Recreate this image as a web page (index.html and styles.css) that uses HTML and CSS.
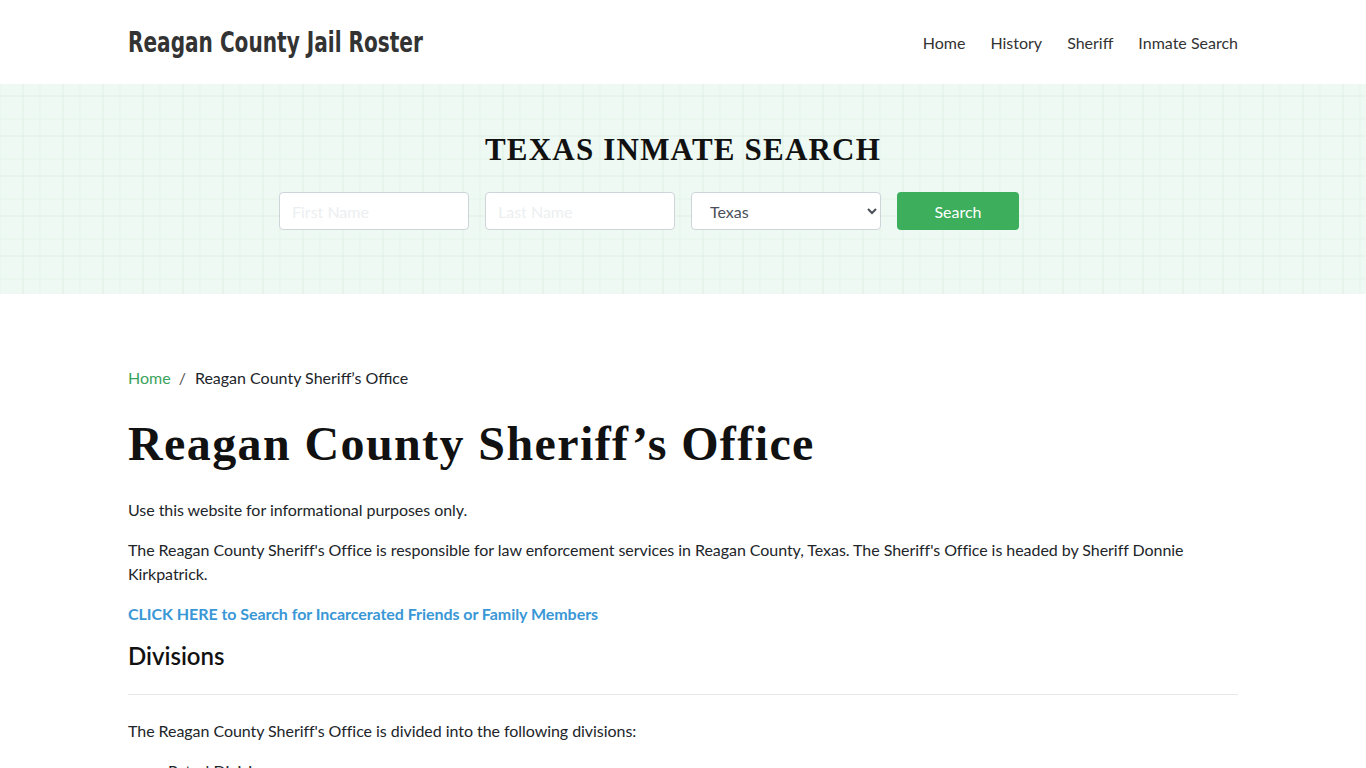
FILE: index.html
```html
<!DOCTYPE html>
<html lang="en">
<head>
  <meta charset="UTF-8" />
  <meta name="viewport" content="width=device-width, initial-scale=1.0" />
  <title>Reagan County Sheriff's Office</title>
  <link rel="stylesheet" href="styles.css">
</head>
<body>

<!-- Top bar -->
<header class="site-header">
  <div class="container header-row">
    <a class="brand" href="#">Reagan County Jail Roster</a>
    <nav class="main-nav">
      <a href="#">Home</a>
      <a href="#">History</a>
      <a href="#">Sheriff</a>
      <a href="#">Inmate Search</a>
    </nav>
  </div>
</header>

<!-- Search banner -->
<section class="search-banner">
  <h2 class="banner-title">TEXAS INMATE SEARCH</h2>
  <form class="container search-form" onsubmit="return false">
    <input type="text" class="field" placeholder="First Name">
    <input type="text" class="field" placeholder="Last Name">
    <select class="field select">
      <option>Texas</option>
    </select>
    <button class="search-btn" type="submit">Search</button>
  </form>
</section>

<main class="container content">
  <div class="breadcrumb">
    <a href="#">Home</a>
    <span class="sep">/</span>
    <span>Reagan County Sheriff’s Office</span>
  </div>

  <h1 class="page-title">Reagan County Sheriff’s Office</h1>

  <p>Use this website for informational purposes only.</p>
  <p>The Reagan County Sheriff's Office is responsible for law enforcement services in Reagan County, Texas. The Sheriff's Office is headed by Sheriff Donnie Kirkpatrick.</p>
  <p class="cta-line"><a class="cta" href="#">CLICK HERE to Search for Incarcerated Friends or Family Members</a></p>

  <h2 class="section-title">Divisions</h2>
  <hr>

  <p>The Reagan County Sheriff's Office is divided into the following divisions:</p>
  <ul class="divisions">
    <li>Patrol Division</li>
    <li>Jail Division</li>
    <li>Civil Division</li>
  </ul>
</main>

</body>
</html>
```

FILE: styles.css
```css
body {
  margin: 0;
  font-family: Lato, "Open Sans", sans-serif;
  font-size: 16px;
  line-height: 1.5;
  color: #212529;
  background: #fff;
}

a {
  text-decoration: none;
}

.container {
  width: 1110px;
  margin: 0 auto;
}

/* header */
.site-header {
  height: 84px;
  background: #fff;
}

.header-row {
  height: 100%;
  display: flex;
  align-items: center;
  justify-content: space-between;
}

/* condensed logo type: squeeze the condensed face a bit further */
.brand {
  font-family: "DejaVu Sans Condensed", "DejaVu Sans", sans-serif;
  font-weight: bold;
  font-size: 29px;
  color: #333;
  margin-top: 2px;
  width: 300px;
  white-space: nowrap;
  transform: scaleX(0.77);
  transform-origin: left center;
}

.main-nav {
  display: flex;
  gap: 25px;
  margin-top: 2px;
}

.main-nav a {
  color: #333;
  font-size: 16px;
}

/* search banner */
.search-banner {
  height: 210px;
  box-sizing: border-box;
  padding-top: 47px;
  background-color: #edf9f2;
  background-image:
    linear-gradient(90deg, rgba(222, 238, 228, 0.45) 2px, transparent 2px),
    linear-gradient(90deg, rgba(222, 238, 228, 0.25) 2px, transparent 2px),
    linear-gradient(rgba(222, 238, 228, 0.45) 2px, transparent 2px),
    linear-gradient(rgba(222, 238, 228, 0.25) 2px, transparent 2px);
  background-size: 40px 40px;
  background-position: 22px 0, 39px 0, 0 11px, 0 34px;
}

.banner-title {
  margin: 0;
  text-align: center;
  font-family: "Liberation Serif", serif;
  font-weight: bold;
  font-size: 31px;
  letter-spacing: 1.2px;
  line-height: 38px;
  color: #111;
}

.search-form {
  display: flex;
  gap: 16px;
  margin-top: 23px;
  box-sizing: border-box;
  padding-left: 151px;
}

.field {
  width: 190px;
  height: 38px;
  box-sizing: border-box;
  border: 1px solid #ced4da;
  border-radius: 4px;
  padding: 6px 12px;
  font-family: Lato, sans-serif;
  font-size: 16px;
  color: #495057;
  background: #fff;
}

.field::placeholder {
  color: #eceff1;
}

.select {
  padding-left: 14px;
}

.search-btn {
  width: 122px;
  height: 38px;
  border: none;
  border-radius: 4px;
  background: #3cae5c;
  color: #fff;
  font-family: Lato, sans-serif;
  font-size: 16px;
  cursor: pointer;
}

/* main content */
.content {
  padding-top: 72px;
}

.breadcrumb {
  display: flex;
  gap: 8px;
  line-height: 24px;
}

.breadcrumb a {
  color: #3aa35d;
}

.breadcrumb .sep {
  color: #555;
  margin-right: 1px;
}

.page-title {
  margin: 28px 0 28px;
  font-family: "Liberation Serif", serif;
  font-weight: bold;
  font-size: 48px;
  letter-spacing: 1.4px;
  line-height: 52px;
  color: #111;
}

p {
  margin: 0 0 16px;
  letter-spacing: -0.05px;
}

.cta-line {
  margin-bottom: 14px;
}

.cta {
  color: #3a97d6;
  font-weight: bold;
}

.section-title {
  margin: 0;
  font-size: 24px;
  font-weight: 600;
  line-height: 32px;
  color: #111;
}

hr {
  border: 0;
  border-top: 1px solid #e8e8e8;
  margin: 22px 0 24px;
}

.divisions {
  margin: 0;
  padding-left: 40px;
}
```
